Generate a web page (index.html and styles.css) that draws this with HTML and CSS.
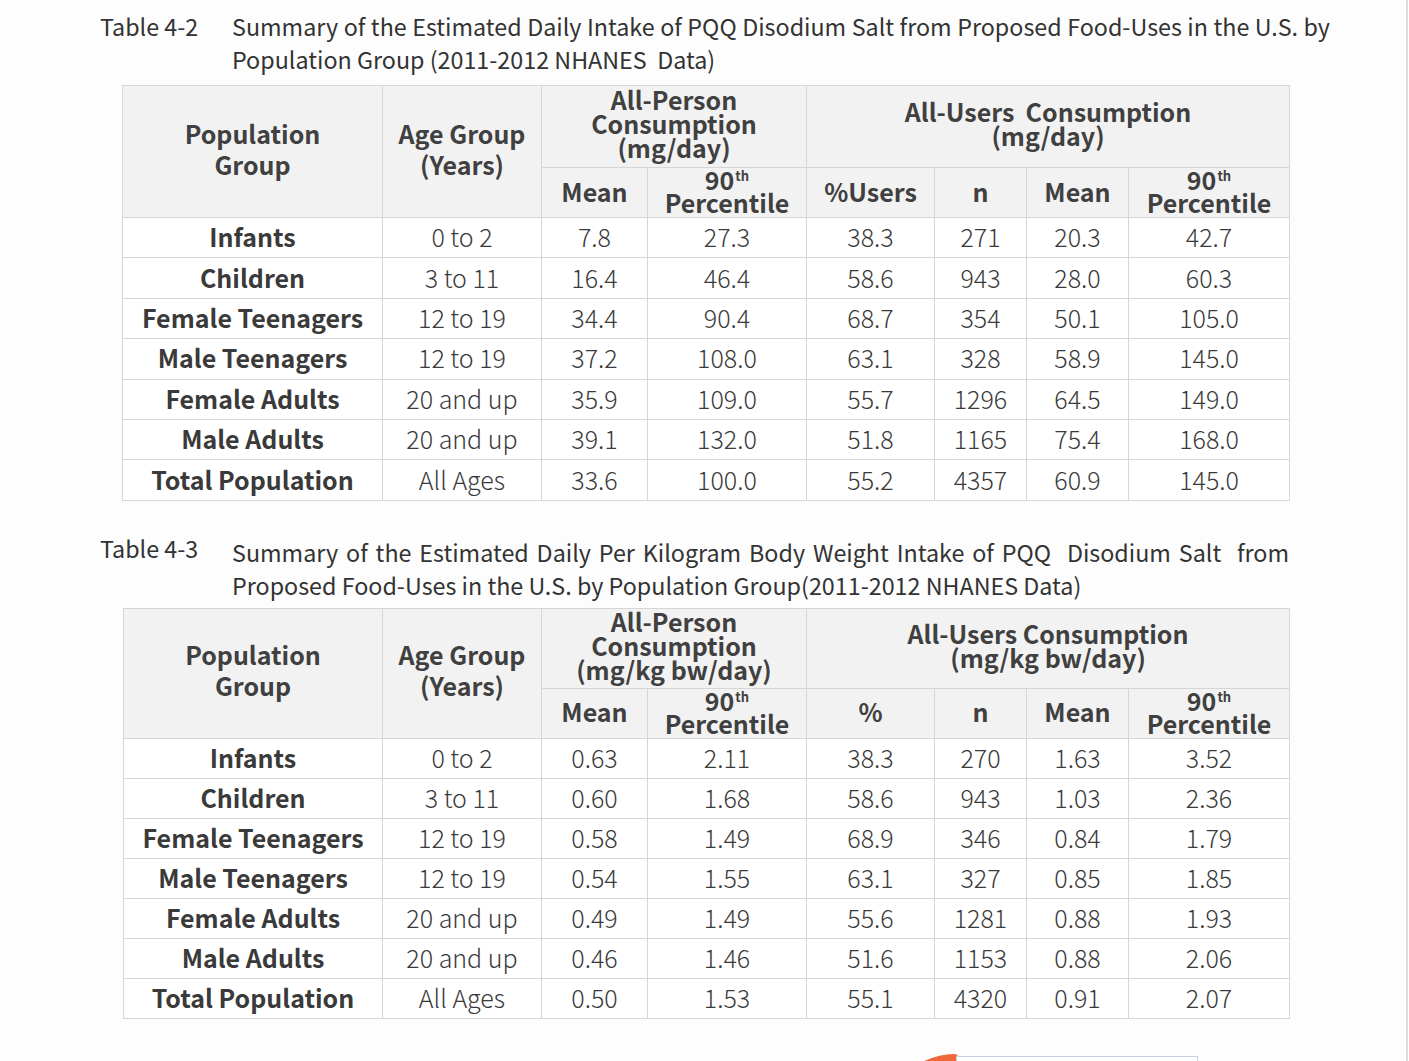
FILE: index.html
```html
<!DOCTYPE html>
<html lang="en">
<head>
<meta charset="utf-8">
<title>Tables 4-2 and 4-3</title>
<link rel="stylesheet" href="styles.css">
</head>
<body>
<div class="page">
  <div class="caption caption-a">
    <div class="cap-label">Table 4-2</div>
    <div class="cap-text cap-text-a">Summary of the Estimated Daily Intake of PQQ Disodium Salt from Proposed Food-Uses in the U.S. by Population Group (2011-2012 NHANES&nbsp; Data)</div>
  </div>
  <table class="data t1">
    <colgroup>
      <col class="c1"><col class="c2"><col class="c3"><col class="c4"><col class="c5"><col class="c6"><col class="c7"><col class="c8">
    </colgroup>
    <thead>
      <tr class="h1">
        <th rowspan="2" class="tall">Population<br>Group</th>
        <th rowspan="2" class="tall">Age Group<br>(Years)</th>
        <th colspan="2">All-Person<br>Consumption<br>(mg/day)</th>
        <th colspan="4">All-Users&nbsp; Consumption<br>(mg/day)</th>
      </tr>
      <tr class="h2">
        <th>Mean</th>
        <th class="pct">90<sup>th</sup><br>Percentile</th>
        <th>%Users</th>
        <th>n</th>
        <th>Mean</th>
        <th class="pct">90<sup>th</sup><br>Percentile</th>
      </tr>
    </thead>
    <tbody>
      <tr><th>Infants</th><td>0 to 2</td><td>7.8</td><td>27.3</td><td>38.3</td><td>271</td><td>20.3</td><td>42.7</td></tr>
      <tr><th>Children</th><td>3 to 11</td><td>16.4</td><td>46.4</td><td>58.6</td><td>943</td><td>28.0</td><td>60.3</td></tr>
      <tr><th>Female Teenagers</th><td>12 to 19</td><td>34.4</td><td>90.4</td><td>68.7</td><td>354</td><td>50.1</td><td>105.0</td></tr>
      <tr><th>Male Teenagers</th><td>12 to 19</td><td>37.2</td><td>108.0</td><td>63.1</td><td>328</td><td>58.9</td><td>145.0</td></tr>
      <tr><th>Female Adults</th><td>20 and up</td><td>35.9</td><td>109.0</td><td>55.7</td><td>1296</td><td>64.5</td><td>149.0</td></tr>
      <tr><th>Male Adults</th><td>20 and up</td><td>39.1</td><td>132.0</td><td>51.8</td><td>1165</td><td>75.4</td><td>168.0</td></tr>
      <tr><th>Total Population</th><td>All Ages</td><td>33.6</td><td>100.0</td><td>55.2</td><td>4357</td><td>60.9</td><td>145.0</td></tr>
    </tbody>
  </table>

  <div class="caption caption-b">
    <div class="cap-label cap-label-b">Table 4-3</div>
    <div class="cap-text cap-text-b">Summary of the Estimated Daily Per Kilogram Body Weight Intake of PQQ&nbsp; Disodium Salt&nbsp; from Proposed Food-Uses in the U.S. by Population Group(2011-2012 NHANES Data)</div>
  </div>
  <table class="data t2">
    <colgroup>
      <col class="c1b"><col class="c2"><col class="c3"><col class="c4"><col class="c5"><col class="c6"><col class="c7"><col class="c8">
    </colgroup>
    <thead>
      <tr class="h1b">
        <th rowspan="2" class="tall">Population<br>Group</th>
        <th rowspan="2" class="tall">Age Group<br>(Years)</th>
        <th colspan="2">All-Person<br>Consumption<br>(mg/kg bw/day)</th>
        <th colspan="4">All-Users Consumption<br>(mg/kg bw/day)</th>
      </tr>
      <tr class="h2">
        <th>Mean</th>
        <th class="pct">90<sup>th</sup><br>Percentile</th>
        <th>%</th>
        <th>n</th>
        <th>Mean</th>
        <th class="pct">90<sup>th</sup><br>Percentile</th>
      </tr>
    </thead>
    <tbody>
      <tr><th>Infants</th><td>0 to 2</td><td>0.63</td><td>2.11</td><td>38.3</td><td>270</td><td>1.63</td><td>3.52</td></tr>
      <tr><th>Children</th><td>3 to 11</td><td>0.60</td><td>1.68</td><td>58.6</td><td>943</td><td>1.03</td><td>2.36</td></tr>
      <tr><th>Female Teenagers</th><td>12 to 19</td><td>0.58</td><td>1.49</td><td>68.9</td><td>346</td><td>0.84</td><td>1.79</td></tr>
      <tr><th>Male Teenagers</th><td>12 to 19</td><td>0.54</td><td>1.55</td><td>63.1</td><td>327</td><td>0.85</td><td>1.85</td></tr>
      <tr><th>Female Adults</th><td>20 and up</td><td>0.49</td><td>1.49</td><td>55.6</td><td>1281</td><td>0.88</td><td>1.93</td></tr>
      <tr><th>Male Adults</th><td>20 and up</td><td>0.46</td><td>1.46</td><td>51.6</td><td>1153</td><td>0.88</td><td>2.06</td></tr>
      <tr><th>Total Population</th><td>All Ages</td><td>0.50</td><td>1.53</td><td>55.1</td><td>4320</td><td>0.91</td><td>2.07</td></tr>
    </tbody>
  </table>

  <div class="next-figure">
    <svg class="arrow" width="40" height="12" viewBox="0 0 40 12" aria-hidden="true">
      <path d="M0 10 Q18 1 34 1 Q38 1 38 4 L38 12 L2 12 Z" fill="#f0673a"/>
    </svg>
    <div class="figure-box"></div>
  </div>
</div>
</body>
</html>
```

FILE: styles.css
```css
html, body {
  margin: 0;
  padding: 0;
  background: #fdfdfd;
  overflow: hidden;
}

.page {
  width: 1408px;
  height: 1061px;
  border-right: 2px solid #dcdcdc;
  padding-left: 100px;
  box-sizing: border-box;
  overflow: hidden;
  font-family: "Noto Sans CJK SC", "Noto Sans", sans-serif;
  color: #333;
}

.caption {
  display: flex;
  font-size: 23.3px;
  line-height: 33px;
  font-weight: 400;
  color: #333;
}

.caption-a {
  padding-top: 10px;
}

.caption-b {
  margin-top: 35px;
}

.cap-label {
  width: 132px;
  flex: none;
}

.cap-label-b {
  position: relative;
  top: -4px;
}

.cap-text {
  text-align: justify;
}

.cap-text-a {
  width: 1098px;
}

.cap-text-b {
  width: 1057px;
}

.data {
  border-collapse: collapse;
  table-layout: fixed;
  width: 1167px;
  font-size: 25px;
  color: #3a3a3a;
}

.t1 {
  margin-top: 9px;
  margin-left: 22px;
}

.t2 {
  margin-top: 6px;
  margin-left: 23px;
  width: 1166px;
}

.c1 { width: 260px; }
.c1b { width: 259px; }
.c2 { width: 159px; }
.c3 { width: 106px; }
.c4 { width: 159px; }
.c5 { width: 128px; }
.c6 { width: 92px; }
.c7 { width: 102px; }
.c8 { width: 161px; }

.data th,
.data td {
  border: 1px solid #d6d6d6;
  padding: 0 0 3px;
  text-align: center;
  vertical-align: middle;
  white-space: nowrap;
}

.data thead th {
  background: #f2f2f2;
  font-weight: 700;
  line-height: 24px;
  color: #404040;
  padding-bottom: 7px;
}

.data thead th.tall {
  line-height: 31px;
  padding-bottom: 6px;
}

.data .h2 th {
  padding-bottom: 4px;
}

.data .h2 th.pct {
  line-height: 23px;
  padding-bottom: 3px;
}

.data sup {
  font-size: 13px;
  line-height: 0;
  vertical-align: 9px;
  margin-left: 1px;
}

.h1 { height: 82px; }
.h1b { height: 80px; }
.h2 { height: 49px; }

.data tbody tr {
  height: 40.4px;
}

.t2 tbody tr {
  height: 40px;
}

.data tbody th {
  font-weight: 700;
  background: #fff;
  color: #3a3a3a;
}

.data tbody td {
  font-weight: 300;
  background: #fff;
}

.next-figure {
  display: flex;
  align-items: flex-end;
  margin-top: 34px;
  margin-left: 820px;
  height: 12px;
}

.arrow {
  display: block;
  flex: none;
}

.figure-box {
  width: 240px;
  height: 8px;
  border: 1px solid #c6d3df;
  border-bottom: none;
  background: #fff;
  margin-left: -4px;
}
```
